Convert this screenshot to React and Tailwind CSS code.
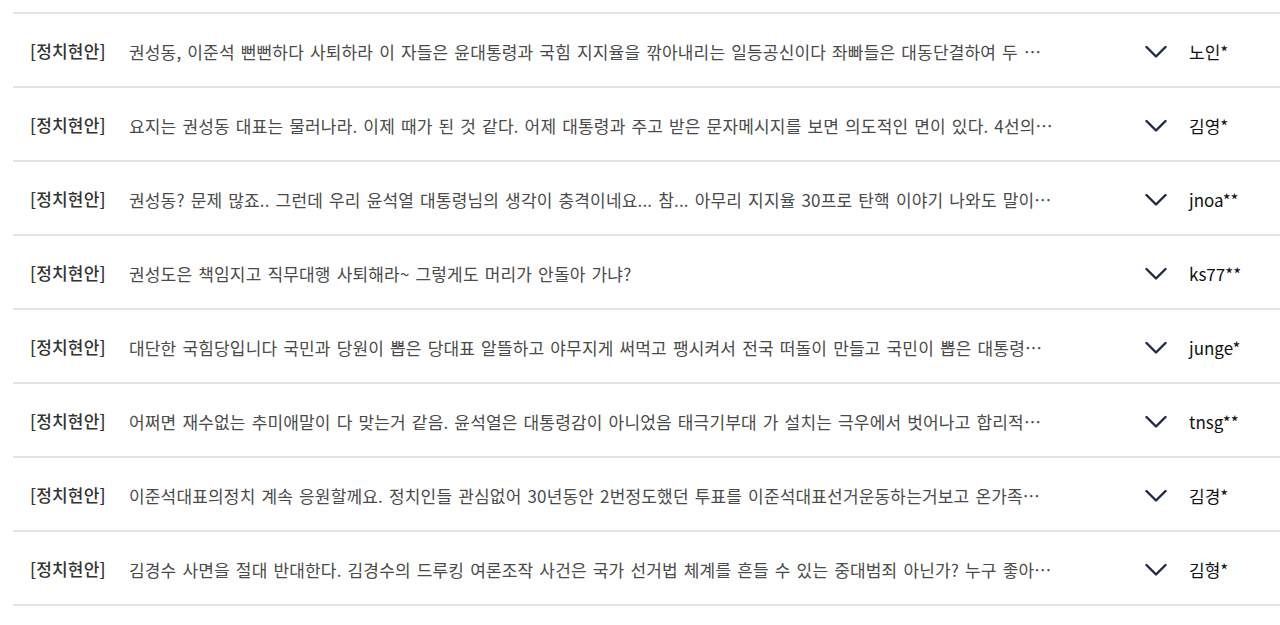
const rows = [
  {
    text: '권성동, 이준석 뻔뻔하다 사퇴하라 이 자들은 윤대통령과 국힘 지지율을 깎아내리는 일등공신이다 좌빠들은 대동단결하여 두 번 다시 이런 일이 없도록 해야 한다',
    name: '노인*',
  },
  {
    text: '요지는 권성동 대표는 물러나라. 이제 때가 된 것 같다. 어제 대통령과 주고 받은 문자메시지를 보면 의도적인 면이 있다. 4선의원이 그걸 모를리 없다',
    name: '김영*',
  },
  {
    text: '권성동? 문제 많죠.. 그런데 우리 윤석열 대통령님의 생각이 충격이네요... 참... 아무리 지지율 30프로 탄핵 이야기 나와도 말이 되는 소리를',
    name: 'jnoa**',
  },
  {
    text: '권성도은 책임지고 직무대행 사퇴해라~ 그렇게도 머리가 안돌아 가냐?',
    name: 'ks77**',
  },
  {
    text: '대단한 국힘당입니다 국민과 당원이 뽑은 당대표 알뜰하고 야무지게 써먹고 팽시켜서 전국 떠돌이 만들고 국민이 뽑은 대통령을 흔들고',
    name: 'junge*',
  },
  {
    text: '어쩌면 재수없는 추미애말이 다 맞는거 같음. 윤석열은 대통령감이 아니었음 태극기부대 가 설치는 극우에서 벗어나고 합리적인 보수로 가야',
    name: 'tnsg**',
  },
  {
    text: '이준석대표의정치 계속 응원할께요. 정치인들 관심없어 30년동안 2번정도했던 투표를 이준석대표선거운동하는거보고 온가족이 투표했습니다',
    name: '김경*',
  },
  {
    text: '김경수 사면을 절대 반대한다. 김경수의 드루킹 여론조작 사건은 국가 선거법 체계를 흔들 수 있는 중대범죄 아닌가? 누구 좋아서 사면을',
    name: '김형*',
  },
]

const Chevron = () => (
  <svg width="22" height="14" viewBox="0 0 22 14" fill="none">
    <path d="M1.5 2 L11 11.5 L20.5 2" stroke="#1e2a47" strokeWidth="2.4" strokeLinecap="round" strokeLinejoin="round" />
  </svg>
)

export default function App() {
  return (
    <div
      className="w-[1280px] h-[625px] overflow-hidden bg-white pl-[13px] pt-3"
      style={{ fontFamily: '"Noto Sans CJK KR", "Noto Sans", sans-serif' }}
    >
      <ul className="border-t-2 border-[#e3e3e3]">
        {rows.map((r, i) => (
          <li key={i} className="h-[74px] border-b-2 border-[#e3e3e3] flex items-center pl-[17px] pt-[4px]">
            {/* category */}
            <span className="w-[99px] shrink-0 text-[17px] font-medium text-[#333] tracking-[0.01em] -mt-[3px]">
              [정치현안]
            </span>
            {/* comment */}
            <span className="w-[926px] shrink-0 truncate text-[17px] text-[#4a4a4a] tracking-[0.01em] [word-spacing:2px]">
              {r.text}
            </span>
            <span className="ml-[90px] shrink-0 flex items-center">
              <Chevron />
            </span>
            <span className="ml-[22px] shrink-0 whitespace-nowrap text-[17px] font-normal text-[#111]">
              {r.name}
            </span>
          </li>
        ))}
      </ul>
    </div>
  )
}
